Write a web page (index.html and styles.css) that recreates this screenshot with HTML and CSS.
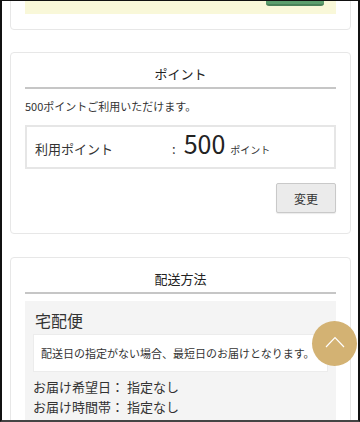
FILE: index.html
```html
<!DOCTYPE html>
<html lang="ja">
<head>
<meta charset="utf-8">
<title>ポイント・配送方法</title>
<link rel="stylesheet" href="styles.css">
</head>
<body>
<div class="screen">
  <div class="content">
    <section class="card card-top">
      <div class="notice">
        <span class="green-btn"></span>
      </div>
    </section>

    <section class="card">
      <h2 class="card-title">ポイント</h2>
      <p class="note">500ポイントご利用いただけます。</p>
      <div class="point-box">
        <span class="point-label">利用ポイント</span>
        <span class="point-colon">:</span>
        <span class="point-value">500</span>
        <span class="point-unit">ポイント</span>
      </div>
      <div class="actions">
        <button class="change-btn" type="button">変更</button>
      </div>
    </section>

    <section class="card">
      <h2 class="card-title">配送方法</h2>
      <div class="ship-box">
        <div class="ship-name">宅配便</div>
        <div class="ship-note">配送日の指定がない場合、最短日のお届けとなります。</div>
        <div class="ship-row">お届け希望日： 指定なし</div>
        <div class="ship-row">お届け時間帯： 指定なし</div>
      </div>
    </section>
  </div>

  <a class="to-top" href="#" aria-label="ページトップへ">
    <svg width="20" height="12" viewBox="0 0 20 12" fill="none" stroke="#fff" stroke-width="1.2">
      <path d="M1 11 L10 1.5 L19 11"/>
    </svg>
  </a>
</div>
</body>
</html>
```

FILE: styles.css
```css
* { box-sizing: border-box; }

html, body {
  margin: 0;
  padding: 0;
  background: #fff;
}

body {
  font-family: "Noto Sans CJK JP", "Noto Sans", sans-serif;
  color: #333;
}

.screen {
  position: relative;
  width: 360px;
  height: 422px;
  overflow: hidden;
  border-left: 2px solid #111;
  border-right: 2px solid #111;
  border-top: 1px solid #111;
  border-bottom: 2px solid #444;
  background: #fff;
}

.content {
  padding: 0 7px 0 8px;
}

.card {
  border: 1px solid #e7e7e7;
  border-radius: 4px;
  padding: 0 14px 20px;
  margin-top: 22px;
  background: #fff;
}

.card-top {
  margin-top: -38px;
  padding: 10px 14px 15px;
}

.notice {
  height: 40px;
  background: #f9f8d9;
  display: flex;
  justify-content: flex-end;
  align-items: flex-end;
  padding: 0 12px 8px 0;
}

.green-btn {
  display: block;
  width: 58px;
  height: 30px;
  background: #5c9f6e;
  border-radius: 3px;
  border-bottom: 2px solid #4a8259;
}

.card-title {
  margin: 0;
  padding: 11px 0 3px;
  font-size: 13px;
  line-height: 20px;
  font-weight: normal;
  text-align: center;
  color: #222;
  border-bottom: 2px solid #c6c6c6;
}

.note {
  margin: 9px 0 0;
  font-size: 11px;
  line-height: 16px;
}

.point-box {
  margin-top: 11px;
  height: 44px;
  border: 2px solid #e6e6e6;
  padding: 1px 8px 0;
  display: flex;
  align-items: baseline;
}

.point-label {
  width: 137px;
  font-size: 13px;
  line-height: 30px;
}

.point-colon {
  font-size: 13px;
  margin-right: 8px;
}

.point-value {
  font-size: 25px;
  line-height: 30px;
  color: #222;
}

.point-unit {
  font-size: 10px;
  margin-left: 5px;
}

.actions {
  display: flex;
  justify-content: flex-end;
  margin-top: 14px;
}

.change-btn {
  width: 60px;
  height: 30px;
  background: #ebebeb;
  border: 1px solid #c9c9c9;
  border-radius: 2px;
  box-shadow: 0 1px 1px rgba(0,0,0,0.08);
  font-family: "Noto Sans CJK JP", sans-serif;
  font-size: 12px;
  color: #333;
  padding: 0;
}

.card + .card:last-child {
  margin-top: 23px;
}

.ship-box {
  margin-top: 7px;
  background: #f4f4f4;
  padding: 8px 8px 20px;
}

.ship-name {
  margin-left: 2px;
  font-size: 16px;
  line-height: 22px;
  color: #333;
}

.ship-note {
  margin-top: 3px;
  background: #fff;
  border: 1px solid #ececec;
  padding: 10px 7px;
  font-size: 11px;
  line-height: 16px;
}

.ship-row {
  font-size: 13px;
  line-height: 20px;
}

.ship-note + .ship-row {
  margin-top: 5px;
}

.to-top {
  position: absolute;
  left: 310px;
  top: 320px;
  width: 45px;
  height: 45px;
  border-radius: 50%;
  background: #d3b273;
  display: flex;
  align-items: center;
  justify-content: center;
  padding-bottom: 3px;
}
```
